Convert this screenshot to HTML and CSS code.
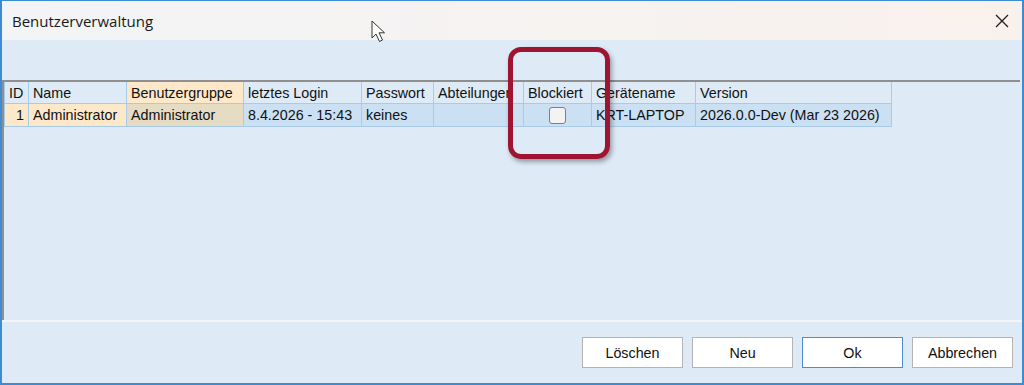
FILE: index.html
```html
<!DOCTYPE html>
<html lang="de">
<head>
    <meta charset="UTF-8">
    <meta name="viewport" content="width=device-width, initial-scale=1.0">
    <title>Benutzerverwaltung</title>
    <link rel="stylesheet" href="styles.css">
</head>
<body>
    <div class="window">
        <div class="titlebar">
            <span class="title">Benutzerverwaltung</span>
            <svg class="close" width="14" height="14" viewBox="0 0 14 14">
                <path d="M1 1 L13 13 M13 1 L1 13" stroke="#1f1f1f" stroke-width="1.3" fill="none"/>
            </svg>
        </div>

        <div class="toolbar"></div>

        <div class="grid">
            <div class="row head">
                <div class="cell">ID</div>
                <div class="cell">Name</div>
                <div class="cell sorted">Benutzergruppe</div>
                <div class="cell">letztes Login</div>
                <div class="cell">Passwort</div>
                <div class="cell">Abteilungen</div>
                <div class="cell">Blockiert</div>
                <div class="cell">Gerätename</div>
                <div class="cell">Version</div>
            </div>
            <div class="row data">
                <div class="cell fixed num">1</div>
                <div class="cell fixed">Administrator</div>
                <div class="cell current">Administrator</div>
                <div class="cell">8.4.2026 - 15:43</div>
                <div class="cell">keines</div>
                <div class="cell"></div>
                <div class="cell center"><span class="checkbox"></span></div>
                <div class="cell">KRT-LAPTOP</div>
                <div class="cell">2026.0.0-Dev (Mar 23 2026)</div>
            </div>
        </div>

        <div class="buttons">
            <button class="btn">Löschen</button>
            <button class="btn">Neu</button>
            <button class="btn default">Ok</button>
            <button class="btn">Abbrechen</button>
        </div>

        <!-- Markierung -->
        <div class="highlight"></div>

        <svg class="cursor" width="18" height="24" viewBox="0 0 18 24">
            <path d="M1 1 L1 18 L5 14 L8.5 21.5 L11.5 20 L8 12.8 L13.5 12.8 Z" fill="#fff" stroke="#333" stroke-width="1" stroke-linejoin="round"/>
        </svg>
    </div>
</body>
</html>
```

FILE: styles.css
```css
* {
    margin: 0;
    padding: 0;
    box-sizing: border-box;
}

body {
    width: 1024px;
    height: 385px;
    background: #deebf7;
    font-family: 'Liberation Sans', Arial, sans-serif;
    font-size: 14.3px;
    color: #111;
    overflow: hidden;
}

.window {
    position: relative;
    width: 1024px;
    height: 385px;
    display: flex;
    flex-direction: column;
    border: 2px solid #3d8bd3;
    border-top-width: 1px;
    background: #deebf7;
}

.titlebar {
    height: 39px;
    display: flex;
    align-items: center;
    justify-content: space-between;
    padding: 0 13px 0 10px;
    background: linear-gradient(to right, #f2f4f6, #f9f1ec);
}

.title {
    font-family: 'Open Sans', 'Noto Sans', sans-serif;
    font-size: 15px;
    color: #1a1a1a;
}

.close {
    margin-top: 1px;
}

.toolbar {
    height: 40px;
}

.grid {
    height: 240px;
    margin-right: 2px;
    border-top: 2px solid #8f8f8f;
    border-left: 2px solid #8f8f8f;
    background: #deebf7;
}

.row {
    display: grid;
    grid-template-columns: 25px 98px 117px 118px 72px 90px 68px 104px 196px;
    width: 888px;
}

.cell {
    border-right: 1px solid #a8cbea;
    border-bottom: 1px solid #a8cbea;
    padding: 0 4px;
    white-space: nowrap;
    overflow: hidden;
    display: flex;
    align-items: center;
}

.head .cell {
    height: 22px;
    padding-top: 1px;
}

.head .cell:first-child,
.data .cell:first-child {
    border-left: 1px solid #a8cbea;
}

.head .sorted {
    background: #fde8c9;
}

.data .cell {
    height: 23px;
    background: #cbe0f3;
}

.data .fixed {
    background: #fde8c9;
}

.data .current {
    background: #e5dcc3;
}

.num {
    justify-content: flex-end;
}

.center {
    justify-content: center;
}

.checkbox {
    width: 17px;
    height: 17px;
    border: 1px solid #7f7f7f;
    border-radius: 3px;
    background: #f3f3f3;
}

.buttons {
    flex: 1;
    display: flex;
    justify-content: flex-end;
    gap: 9px;
    padding: 15px 9px 0 0;
    border-top: 2px solid #f1f5f9;
}

.btn {
    width: 101px;
    height: 31px;
    background: #fff;
    border: 1px solid #b4b4b4;
    font-family: 'Liberation Sans', Arial, sans-serif;
    font-size: 14.3px;
    color: #111;
}

.btn.default {
    border-color: #4a8dd0;
}

.highlight {
    position: absolute;
    left: 506px;
    top: 46px;
    width: 102px;
    height: 112px;
    border: 5px solid #9e1532;
    border-radius: 13px;
    box-shadow: 2px 3px 5px rgba(0, 0, 0, 0.35);
}

.cursor {
    position: absolute;
    left: 369px;
    top: 19px;
}
```
